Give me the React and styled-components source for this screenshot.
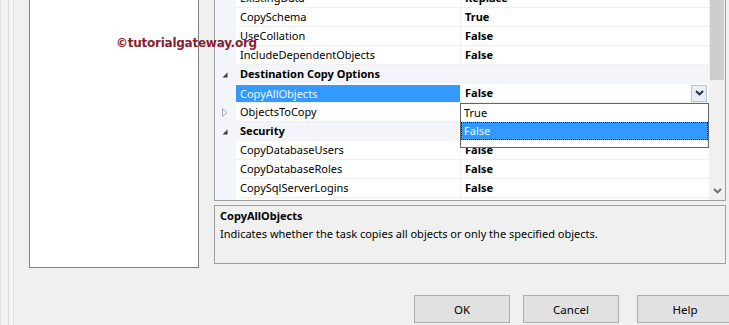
import React from 'react';
import styled, { createGlobalStyle } from 'styled-components';

const Global = createGlobalStyle`
  html, body { margin: 0; padding: 0; background: #f0f0f0; }
  body { width: 729px; height: 325px; overflow: hidden; font-family: "Noto Sans", "Open Sans", sans-serif; color: #000; }
`;

const Page = styled.div`
  position: relative;
  width: 729px;
  height: 325px;
  display: flex;
  background: #f0f0f0;
  overflow: hidden;
`;

const Strip = styled.div`
  flex: none;
  width: 14px;
  background: linear-gradient(to right, #dedede 0 1px, #f2f2f2 1px 8px, #dadada 8px 9px, #f5f5f5 9px 13px, #e4e4e4 13px 14px);
`;

const Main = styled.div`
  flex: 1;
  display: flex;
  flex-direction: column;
  padding-left: 15px;
  min-width: 0;
`;

const TopRow = styled.div`
  display: flex;
  gap: 15px;
  height: 268px;
  flex: none;
`;

const LeftPanel = styled.div`
  flex: none;
  width: 168px;
  height: 267px;
  background: #fff;
  border: 1px solid #828282;
  border-top: none;
`;

const RightCol = styled.div`
  flex: none;
  width: 512px;
  display: flex;
  flex-direction: column;
  gap: 4px;
`;

const Grid = styled.div`
  position: relative;
  height: 200px;
  flex: none;
  display: flex;
  background: #fff;
  border: 1px solid #a0a0a0;
  border-top: none;
`;

const RowsViewport = styled.div`
  flex: 1;
  overflow: hidden;
`;

const RowList = styled.div`
  margin-top: -11px;
  display: flex;
  flex-direction: column;
`;

const Row = styled.div`
  display: grid;
  grid-template-columns: 21px 225px 1fr;
  height: 19px;
  font-size: 11px;
  line-height: 18px;
  background: ${p => (p.$category ? '#f2f5fa' : '#fff')};
`;

const Gutter = styled.div`
  display: flex;
  align-items: center;
  justify-content: flex-end;
  padding-right: 8px;
  background: #f2f5fa;
`;

const NameCell = styled.div`
  box-sizing: border-box;
  padding-left: 4px;
  height: 19px;
  white-space: nowrap;
  font-weight: ${p => (p.$category ? 700 : 400)};
  border-bottom: 1px solid ${p => (p.$category ? '#f2f5fa' : '#f0f0f0')};
  border-right: 1px solid ${p => (p.$category ? 'transparent' : '#f0f0f0')};
  background: ${p => (p.$selected ? '#3399ff' : 'transparent')};
  color: ${p => (p.$selected ? '#eef5ff' : '#000')};
  ${p => p.$selected && 'border-top: 1px solid #fff; line-height: 17px;'}
`;

const ValueCell = styled.div`
  box-sizing: border-box;
  display: flex;
  align-items: center;
  justify-content: space-between;
  padding-left: 4px;
  padding-right: 2px;
  height: 19px;
  font-weight: 700;
  border-bottom: 1px solid ${p => (p.$category ? '#f2f5fa' : '#f0f0f0')};
`;

const DropButton = styled.div`
  box-sizing: border-box;
  width: 16px;
  height: 17px;
  display: flex;
  align-items: center;
  justify-content: center;
  background: #e9eef6;
  border: 1px solid #b9c5d8;
`;

const ScrollBar = styled.div`
  flex: none;
  width: 16px;
  display: flex;
  flex-direction: column;
  align-items: center;
  background: #f0f0f0;
`;

const Thumb = styled.div`
  width: 14px;
  height: 80px;
  background: #cdcdcd;
`;

const ScrollSpacer = styled.div`
  flex: 1;
`;

const ScrollArrow = styled.div`
  height: 18px;
  display: flex;
  align-items: center;
  justify-content: center;
`;

const DropList = styled.div`
  position: absolute;
  left: 245px;
  top: 103px;
  box-sizing: border-box;
  width: 249px;
  height: 45px;
  background: #fff;
  border: 1px solid #646464;
  font-size: 11px;
  z-index: 2;
`;

const DropItem = styled.div`
  box-sizing: border-box;
  height: 18px;
  line-height: 16px;
  padding-left: 2px;
  background: ${p => (p.$active ? '#3399ff' : '#fff')};
  color: ${p => (p.$active ? '#f2f8ff' : '#000')};
  border: 1px ${p => (p.$active ? 'dotted #1a1a1a' : 'solid transparent')};
`;

const Desc = styled.div`
  box-sizing: border-box;
  height: 59px;
  flex: none;
  border: 1px solid #a0a0a0;
  background: #f0f0f0;
  padding: 1px 0 0 5px;
  font-size: 11px;
  line-height: 18px;
`;

const DescTitle = styled.div`
  font-weight: 700;
`;

const ButtonRow = styled.div`
  display: flex;
  margin-top: 27px;
  margin-left: 385px;
  gap: 13px;
`;

const Button = styled.div`
  flex: none;
  box-sizing: border-box;
  width: 96px;
  height: 28px;
  margin-left: ${p => p.$extra || 0}px;
  display: flex;
  align-items: center;
  justify-content: center;
  background: #e1e1e1;
  border: 1px solid #adadad;
  font-size: 11.5px;
`;

const Watermark = styled.div`
  position: absolute;
  left: 116px;
  top: 36px;
  font-family: "DejaVu Sans", sans-serif;
  font-weight: 700;
  font-size: 12px;
  letter-spacing: -0.25px;
  color: #8b1d2f;
  z-index: 3;
`;

const Expanded = () => (
  <svg width="6" height="6" viewBox="0 0 6 6">
    <polygon points="5.5,0.5 5.5,5.5 0.5,5.5" fill="#3a3a3a" />
  </svg>
);

const Collapsed = () => (
  <svg width="6" height="9" viewBox="0 0 6 9">
    <polygon points="0.5,0.5 5,4.5 0.5,8.5" fill="none" stroke="#a8a8a8" strokeWidth="1" />
  </svg>
);

const Chevron = ({ color = '#1e2a44' }) => (
  <svg width="9" height="6" viewBox="0 0 9 6">
    <polyline points="1,1 4.5,4.5 8,1" fill="none" stroke={color} strokeWidth="1.8" />
  </svg>
);

const rows = [
  { name: 'ExistingData', value: 'Replace' },
  { name: 'CopySchema', value: 'True' },
  { name: 'UseCollation', value: 'False' },
  { name: 'IncludeDependentObjects', value: 'False' },
  { name: 'Destination Copy Options', category: true },
  { name: 'CopyAllObjects', value: 'False', selected: true },
  { name: 'ObjectsToCopy', value: '', collapsed: true },
  { name: 'Security', category: true },
  { name: 'CopyDatabaseUsers', value: 'False' },
  { name: 'CopyDatabaseRoles', value: 'False' },
  { name: 'CopySqlServerLogins', value: 'False' },
  { name: 'CopyServerRoles', value: 'False' },
];

export default function App() {
  return (
    <>
      <Global />
      <Page>
        <Strip />
        <Main>
          <TopRow>
            <LeftPanel />
            <RightCol>
              <Grid>
                <RowsViewport>
                  <RowList>
                    {rows.map(r => (
                      <Row key={r.name} $category={r.category}>
                        <Gutter>
                          {r.category && <Expanded />}
                          {r.collapsed && <Collapsed />}
                        </Gutter>
                        <NameCell $category={r.category} $selected={r.selected}>
                          {r.name}
                        </NameCell>
                        <ValueCell $category={r.category}>
                          <span>{r.value}</span>
                          {r.selected && (
                            <DropButton>
                              <Chevron />
                            </DropButton>
                          )}
                        </ValueCell>
                      </Row>
                    ))}
                  </RowList>
                </RowsViewport>
                <ScrollBar>
                  <Thumb />
                  <ScrollSpacer />
                  <ScrollArrow>
                    <Chevron color="#6a6a6a" />
                  </ScrollArrow>
                </ScrollBar>
                <DropList>
                  <DropItem>True</DropItem>
                  <DropItem $active>False</DropItem>
                </DropList>
              </Grid>
              <Desc>
                <DescTitle>CopyAllObjects</DescTitle>
                <div>Indicates whether the task copies all objects or only the specified objects.</div>
              </Desc>
            </RightCol>
          </TopRow>
          <ButtonRow>
            <Button>OK</Button>
            <Button>Cancel</Button>
            <Button $extra={5}>Help</Button>
          </ButtonRow>
        </Main>
        <Watermark>©tutorialgateway.org</Watermark>
      </Page>
    </>
  );
}
